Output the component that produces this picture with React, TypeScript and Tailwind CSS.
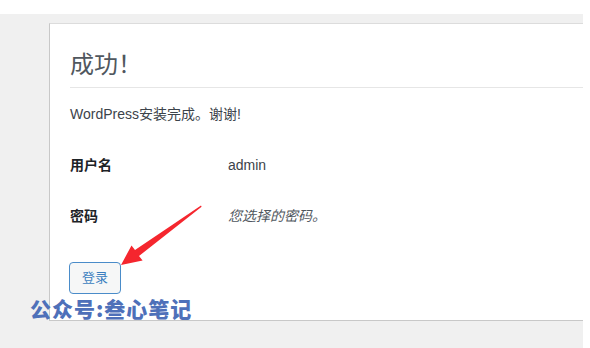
import React from "react";

const FONT = "font-['Liberation_Sans','Noto_Sans_CJK_SC',sans-serif]";

const Row = ({ label, children }: { label: string; children: React.ReactNode }) => (
  <div className="flex items-center h-[20px]">
    <div className="w-[158px] text-[14px] font-bold text-[#1d2327]">{label}</div>
    <div className="text-[14px] text-[#3c434a]">{children}</div>
  </div>
);

const Arrow = () => (
  <svg className="absolute left-0 top-0 pointer-events-none" width="590" height="348" viewBox="0 0 590 348">
    <polygon
      points="121,265 131.5,245.5 135,250 201,205.5 201.6,206.8 139,256 142.6,260.4"
      fill="#f5262e"
    />
  </svg>
);

export default function App() {
  return (
    <div className={`relative w-[590px] h-[348px] bg-white overflow-hidden ${FONT}`}>
      <div className="mt-[14px] w-[583px] h-[334px] bg-[#f0f0f0] pt-[9px] pl-[49px]">
        <div className="h-[298px] bg-white border border-[#c8c8c8] border-r-0 border-t-[#dcdcdc] pt-[25px] pl-[20px]">
          <h1 className="h-[32px] leading-[32px] text-[24px] text-[#50575e] font-normal">成功！</h1>
          <div className="mt-[6px] border-t border-[#e6e6e6]" />
          <p className="mt-[16px] h-[20px] leading-[20px] text-[14px] text-[#3c434a]">WordPress安装完成。谢谢!</p>
          <div className="mt-[31px] flex flex-col gap-[31px]">
            <Row label="用户名">admin</Row>
            <Row label="密码">
              <span className="italic text-[#50575e]">您选择的密码。</span>
            </Row>
          </div>
          <button className="mt-[36px] -ml-[1px] w-[52px] h-[32px] rounded-[4px] border border-[#4a8cc9] bg-[#f6f7f7] text-[13px] text-[#3b7fc0]">
            登录
          </button>
        </div>
      </div>
      <div className="absolute left-[30px] top-[296px] text-[21px] leading-[24px] font-black tracking-[1px] text-[#4e70b9] font-['Noto_Sans_CJK_SC',sans-serif]">
        公众号:叁心笔记
      </div>
      <Arrow />
    </div>
  );
}
